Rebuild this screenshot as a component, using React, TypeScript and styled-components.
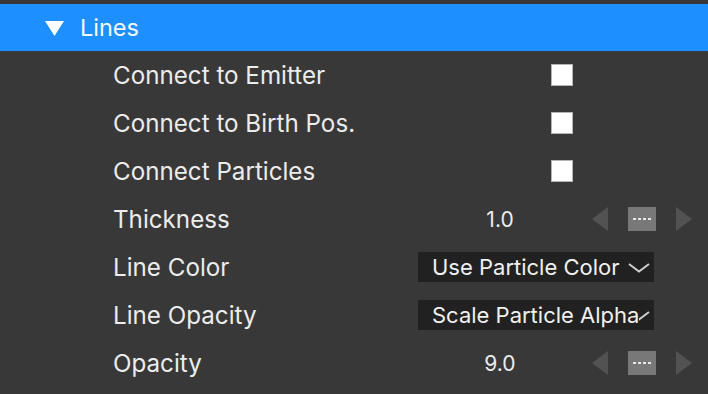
import React from "react";
import styled, { createGlobalStyle } from "styled-components";

const Global = createGlobalStyle`
  html, body { margin: 0; padding: 0; background: #383838; }
  body { font-family: Inter, "Noto Sans", sans-serif; }
`;

const Panel = styled.div`
  width: 708px;
  height: 394px;
  background: #383838;
  padding-top: 4px;
  box-sizing: border-box;
  overflow: hidden;
`;

const Header = styled.div`
  height: 47px;
  background: #1e8fff;
  display: flex;
  align-items: center;
  padding-left: 45px;
  gap: 16px;
  color: #f4f8ff;
  font-size: 23.5px;
`;

const Tri = styled.svg`
  width: 19px;
  height: 15px;
  margin-top: 1px;
`;

const Row = styled.div`
  height: 48px;
  display: grid;
  grid-template-columns: 305px 1fr;
  align-items: center;
  padding-left: 113px;
  color: #ececec;
  font-size: 24.2px;
`;

const Label = styled.div`
  white-space: nowrap;
`;

const Check = styled.div`
  width: 20px;
  height: 20px;
  margin-left: 133px;
  background: #ffffff;
  border: 1px solid #b4b4b4;
`;

const Spinner = styled.div`
  display: flex;
  align-items: center;
`;

const Value = styled.div`
  width: 164px;
  text-align: center;
  font-size: 21px;
`;

const Arrow = styled.svg<{ $gap: number }>`
  width: 16px;
  height: 24px;
  margin-left: ${(p) => p.$gap}px;
`;

const DotsBox = styled.div`
  width: 28px;
  height: 24px;
  margin-left: 20px;
  background: #787878;
  display: flex;
  align-items: center;
  justify-content: center;
  gap: 2px;
`;

const Dot = styled.span`
  width: 3px;
  height: 2px;
  background: #e8e8e8;
`;

const Select = styled.div`
  position: relative;
  width: 236px;
  height: 30px;
  background: #212121;
  display: flex;
  align-items: center;
  padding-left: 14px;
  box-sizing: border-box;
  font-size: 22px;
  color: #f0f0f0;
`;

const SelectText = styled.span`
  position: relative;
  z-index: 1;
  white-space: nowrap;
  background: #212121;
  line-height: 26px;
`;

const Chevron = styled.svg`
  position: absolute;
  right: 4px;
  top: 11px;
  width: 22px;
  height: 10px;
`;

const CheckRow = ({ label }: { label: string }) => (
  <Row>
    <Label>{label}</Label>
    <Check />
  </Row>
);

const SpinRow = ({ label, value }: { label: string; value: string }) => (
  <Row>
    <Label>{label}</Label>
    <Spinner>
      <Value>{value}</Value>
      <Arrow $gap={10} viewBox="0 0 16 24">
        <polygon points="16,0 0,12 16,24" fill="#525252" />
      </Arrow>
      <DotsBox>
        <Dot />
        <Dot />
        <Dot />
        <Dot />
      </DotsBox>
      <Arrow $gap={20} viewBox="0 0 16 24">
        <polygon points="0,0 16,12 0,24" fill="#525252" />
      </Arrow>
    </Spinner>
  </Row>
);

const SelectRow = ({ label, value }: { label: string; value: string }) => (
  <Row>
    <Label>{label}</Label>
    <Select>
      <Chevron viewBox="0 0 22 10">
        <polyline points="1,1 11,8.5 21,1" fill="none" stroke="#cfcfcf" strokeWidth="2" />
      </Chevron>
      <SelectText>{value}</SelectText>
    </Select>
  </Row>
);

export default function App() {
  return (
    <>
      <Global />
      <Panel>
        <Header>
          <Tri viewBox="0 0 19 15">
            <polygon points="0,0 19,0 9.5,15" fill="#ffffff" />
          </Tri>
          <span>Lines</span>
        </Header>
        <CheckRow label="Connect to Emitter" />
        <CheckRow label="Connect to Birth Pos." />
        <CheckRow label="Connect Particles" />
        <SpinRow label="Thickness" value="1.0" />
        <SelectRow label="Line Color" value="Use Particle Color" />
        <SelectRow label="Line Opacity" value="Scale Particle Alpha" />
        <SpinRow label="Opacity" value="9.0" />
      </Panel>
    </>
  );
}
